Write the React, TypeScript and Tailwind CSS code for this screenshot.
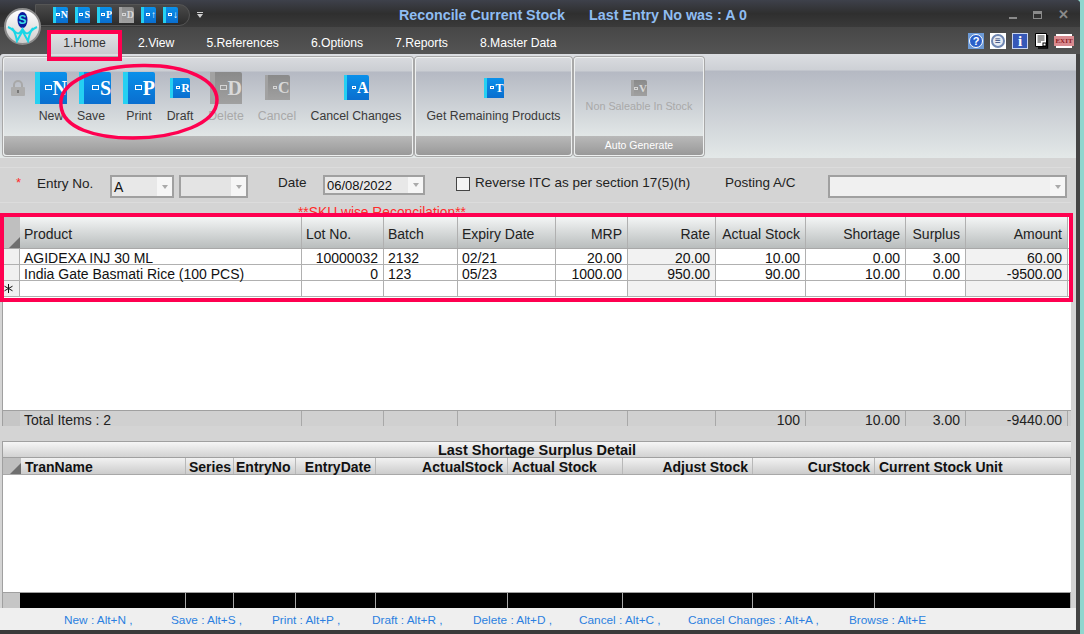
import type { ReactNode } from "react";

const GRID1 = "grid grid-cols-[17px_282px_82px_74px_98px_72px_88px_90px_100px_60px_102px]";
const GRID2 = "grid grid-cols-[18px_165px_48px_62px_80px_132px_115px_130px_122px_196px]";

const stockCols = [
  { name: "Product", right: false },
  { name: "Lot No.", right: false },
  { name: "Batch", right: false },
  { name: "Expiry Date", right: false },
  { name: "MRP", right: true },
  { name: "Rate", right: true },
  { name: "Actual Stock", right: true },
  { name: "Shortage", right: true },
  { name: "Surplus", right: true },
  { name: "Amount", right: true },
];

const rows = [
  ["AGIDEXA INJ 30 ML", "10000032", "2132", "02/21", "20.00", "20.00", "10.00", "0.00", "3.00", "60.00"],
  ["India Gate Basmati Rice (100 PCS)", "0", "123", "05/23", "1000.00", "950.00", "90.00", "10.00", "0.00", "-9500.00"],
  ["", "", "", "", "", "", "", "", "", ""],
];

const totals = ["Total Items : 2", "", "", "", "", "", "100", "10.00", "3.00", "-9440.00"];

const detailCols = [
  { name: "TranName", right: false },
  { name: "Series", right: false },
  { name: "EntryNo", right: false },
  { name: "EntryDate", right: true },
  { name: "ActualStock", right: true },
  { name: "Actual Stock", right: false },
  { name: "Adjust Stock", right: true },
  { name: "CurStock", right: true },
  { name: "Current Stock Unit", right: false },
];

const shortcuts = [
  { label: "New : Alt+N ,", w: "w-[107px]" },
  { label: "Save : Alt+S ,", w: "w-[101px]" },
  { label: "Print : Alt+P ,", w: "w-[100px]" },
  { label: "Draft : Alt+R ,", w: "w-[101px]" },
  { label: "Delete : Alt+D ,", w: "w-[106px]" },
  { label: "Cancel : Alt+C ,", w: "w-[109px]" },
  { label: "Cancel Changes : Alt+A ,", w: "w-[161px]" },
  { label: "Browse : Alt+E", w: "w-[80px]" },
];

function BookIcon({
  letter,
  box,
  text,
  off,
  big,
}: {
  letter: ReactNode;
  box: string;
  text: string;
  off?: boolean;
  big?: boolean;
}) {
  return (
    <div
      className={`${box} flex items-center justify-end overflow-hidden rounded-tr-[2px] ${big ? "border-l-[5px]" : "border-l-[3px]"} ${
        off
          ? "border-[#a2a2a2] bg-gradient-to-b from-[#8a8a8a] to-[#a0a0a0]"
          : "border-[#25d0f2] bg-gradient-to-b from-[#0a90ea] to-[#0a6ecf]"
      }`}
    >
      <span className={`mr-[1px] shrink-0 border border-white ${big ? "h-[5px] w-[7px]" : "h-[3px] w-[4px]"} ${off ? "opacity-60" : ""}`} />
      <span className={`${text} font-['Liberation_Serif',serif] font-bold leading-none ${off ? "text-[#d8d8d8]" : "text-white"}`}>
        {letter}
      </span>
    </div>
  );
}

function RibbonButton({
  w,
  label,
  off,
  children,
}: {
  w: string;
  label: string;
  off?: boolean;
  children: ReactNode;
}) {
  return (
    <div className={`${w} flex h-full shrink-0 flex-col items-center`}>
      <div className="flex h-[50px] items-center justify-center pt-[3px]">{children}</div>
      <span className={`-mt-[3px] whitespace-nowrap text-[12.3px] leading-[16px] ${off ? "text-[#a9a9a9]" : "text-[#3a3a3a]"}`}>
        {label}
      </span>
    </div>
  );
}

function RibbonGroup({ w, caption, children }: { w: string; caption?: string; children: ReactNode }) {
  return (
    <div className={`${w} flex h-[99px] shrink-0 flex-col rounded-[3px] border border-[#eef0f0] bg-[linear-gradient(#d8dade_0,#cbced3_13px,#b5b9c3_14px,#e2e7e7_79px)] shadow-[0_0_0_1px_#a8a8a8]`}>
      <div className="flex h-[79px] items-start pt-[3px]">{children}</div>
      <div className="flex h-[19px] items-center justify-center rounded-b-[3px] bg-gradient-to-b from-[#b9b9b9] to-[#999999] text-[10.5px] text-white">
        {caption}
      </div>
    </div>
  );
}

function Combo({ w, h, bg, children }: { w: string; h: string; bg: string; children?: ReactNode }) {
  return (
    <div className={`${w} ${h} ${bg} flex shrink-0 items-center border-2 border-[#a0a0a0] pl-[2px] text-[14px] leading-none text-[#111]`}>
      <span className="flex-1 whitespace-nowrap">{children}</span>
      <span className="flex h-full w-[15px] items-center justify-center bg-[#f6f6f6]">
        <span className="h-0 w-0 border-x-[3px] border-t-[4px] border-x-transparent border-t-[#aaaaaa]" />
      </span>
    </div>
  );
}

function Corner() {
  return (
    <div className="relative bg-[#bfbfbf]">
      <svg className="absolute bottom-0 right-0" width="11" height="11" viewBox="0 0 11 11">
        <path d="M11 0V11H0Z" fill="#6f6f6f" />
      </svg>
    </div>
  );
}

function Logo() {
  return (
    <div className="absolute left-[4px] top-[8px] flex h-[37px] w-[37px] items-center justify-center rounded-full border-2 border-[#8d8d8d] bg-gradient-to-b from-[#ffffff] to-[#cfcfcf]">
      <svg width="31" height="32" viewBox="0 0 31 32">
        <ellipse cx="15.5" cy="9" rx="5" ry="8" fill="#0a1c9c" />
        <text x="15.5" y="13" textAnchor="middle" fontSize="12" fontWeight="700" fill="#3fe0ea" fontFamily="Liberation Sans">
          S
        </text>
        <path
          d="M1 16C6 18 8 20 10 30L15.5 20L21 30C23 20 25 18 30 16M5 17C10 24 12 24 15.5 18C19 24 21 24 26 17"
          fill="none"
          stroke="#19d6e6"
          strokeWidth="2"
        />
      </svg>
    </div>
  );
}

function TopIcons() {
  return (
    <div className="flex items-center gap-[6px] pr-[4px]">
      <div className="flex h-[16px] w-[16px] items-center justify-center bg-[#6d9ad6]">
        <div className="flex h-[14px] w-[14px] items-center justify-center rounded-full border border-white bg-[#2a5fc8] text-[11px] font-bold leading-none text-white">
          ?
        </div>
      </div>
      <div className="flex h-[16px] w-[16px] items-center justify-center bg-white">
        <div className="flex h-[14px] w-[14px] items-center justify-center rounded-full border-2 border-[#6f86b2] bg-[#e6ebf4] text-[10px] font-bold leading-none text-[#2b3f73]">
          ≡
        </div>
      </div>
      <div className="flex h-[16px] w-[16px] items-center justify-center border border-[#c8d4f0] bg-[#3658b8] font-['Liberation_Serif',serif] text-[15px] font-bold leading-none text-white">
        i
      </div>
      <svg width="14" height="16" viewBox="0 0 14 16" className="mx-[1px]">
        <path d="M.5.5H11.5V13.5H.5Z" fill="#fff" stroke="#000" />
        <path d="M2.5 3H9.5M2.5 5H9.5M2.5 7H9.5M2.5 9H6" stroke="#333" />
        <path d="M12.5 2V15H3" fill="none" stroke="#000" strokeWidth="1.4" />
        <rect x="8" y="10" width="3" height="3" fill="none" stroke="#000" />
      </svg>
      <div className="flex h-[14px] w-[16px] items-center justify-center bg-white">
        <span className="bg-[#d98b90] px-[1px] font-['Liberation_Serif',serif] text-[7px] font-bold leading-[10px] text-[#8f1c24]">EXIT</span>
      </div>
    </div>
  );
}

export default function App() {
  return (
    <div className="relative flex h-[634px] w-[1084px] overflow-hidden bg-[#8fd6ce] font-['Liberation_Sans',Arial,sans-serif]">
      <div className="flex h-full w-[1080px] flex-col overflow-hidden rounded-tr-[4px] bg-[#3a3a3a]">
        {/* title bar */}
        <div className="relative flex h-[27px] shrink-0 items-center bg-gradient-to-b from-[#3e414b] via-[#2f2f2f] to-[#3a3a3a]">
          <div className="ml-[35px] mt-[2px] flex h-[22px] w-[155px] shrink-0 items-center gap-[7px] rounded-r-[11px] border border-[#555] bg-gradient-to-b from-[#4a4a4a] to-[#2c2c2c] pl-[17px]">
            <BookIcon letter="N" box="h-[16px] w-[15px]" text="text-[10px]" />
            <BookIcon letter="S" box="h-[16px] w-[15px]" text="text-[10px]" />
            <BookIcon letter="P" box="h-[16px] w-[15px]" text="text-[10px]" />
            <BookIcon letter="D" box="h-[16px] w-[15px]" text="text-[10px]" off />
            <BookIcon letter="↑" box="h-[16px] w-[15px]" text="text-[10px]" />
            <BookIcon letter="↓" box="h-[16px] w-[15px]" text="text-[10px]" />
          </div>
          <span className="ml-[6px] mt-[3px] flex w-[8px] flex-col items-center gap-[1px]">
            <span className="h-[1px] w-[6px] bg-[#cfcfcf]" />
            <span className="h-0 w-0 border-x-[3px] border-t-[4px] border-x-transparent border-t-[#cfcfcf]" />
          </span>
          <span className="ml-[195px] mt-[5px] whitespace-nowrap text-[14.3px] font-bold text-[#8fbdf2]">Reconcile Current Stock</span>
          <span className="ml-[24px] mt-[5px] whitespace-nowrap text-[14.3px] font-bold text-[#8fbdf2]">Last Entry No was : A 0</span>
          <div className="ml-auto mt-[2px] flex items-center gap-[16px] pr-[11px]">
            <span className="mt-[7px] h-[2px] w-[8px] bg-[#8a8a8a]" />
            <span className="h-[8px] w-[9px] border border-t-[3px] border-[#8a8a8a]" />
            <span className="text-[13px] font-bold leading-none text-[#8a8a8a]">✕</span>
          </div>
          <Logo />
        </div>

        {/* menu */}
        <div className="flex h-[27px] shrink-0 items-end justify-between bg-gradient-to-b from-[#474747] to-[#545454] pl-[51px] pr-[4px]">
          <div className="flex h-full items-end text-[12.2px] text-white">
            <div className="flex h-[24px] w-[67px] items-center justify-center rounded-t-[2px] bg-gradient-to-b from-[#e4e5e8] to-[#c9cbd0] pt-[3px] text-[#333]">
              1.Home
            </div>
            <span className="mb-[2px] ml-[20px]">2.View</span>
            <span className="mb-[2px] ml-[32px]">5.References</span>
            <span className="mb-[2px] ml-[32px]">6.Options</span>
            <span className="mb-[2px] ml-[32px]">7.Reports</span>
            <span className="mb-[2px] ml-[32px]">8.Master Data</span>
          </div>
          <div className="mb-[5px]">
            <TopIcons />
          </div>
        </div>

        {/* ribbon */}
        <div className="flex h-[104px] shrink-0 gap-[2px] rounded-tl-[3px] border-r-4 border-[#444] bg-[linear-gradient(#dcdee2_0,#cdd0d5_16px,#b5b9c3_17px,#e3e8e8_100%)] pl-[3px] pt-[3px]">
          <RibbonGroup w="w-[410px]">
            <div className="flex h-[64px] w-[27px] shrink-0 items-start justify-center pt-[19px]">
              <svg width="16" height="17" viewBox="0 0 16 17">
                <path d="M4 8V5a4 4 0 0 1 8 0v3" fill="none" stroke="#a8a8a8" strokeWidth="2" />
                <rect x="1" y="7" width="14" height="9" rx="1" fill="#adadad" />
                <rect x="7" y="10" width="2" height="3" fill="#777" />
              </svg>
            </div>
            <RibbonButton w="w-[40px]" label="New">
              <BookIcon letter="N" box="h-[32px] w-[32px]" text="text-[20px]" big />
            </RibbonButton>
            <RibbonButton w="w-[40px]" label="Save">
              <BookIcon letter="S" box="ml-[8px] h-[32px] w-[32px]" text="text-[20px]" big />
            </RibbonButton>
            <RibbonButton w="w-[56px]" label="Print">
              <BookIcon letter="P" box="h-[32px] w-[32px]" text="text-[20px]" big />
            </RibbonButton>
            <RibbonButton w="w-[26px]" label="Draft">
              <BookIcon letter="R" box="h-[20px] w-[20px]" text="text-[12px]" />
            </RibbonButton>
            <RibbonButton w="w-[66px]" label="Delete" off>
              <BookIcon letter="D" box="h-[32px] w-[32px]" text="text-[20px]" off big />
            </RibbonButton>
            <RibbonButton w="w-[36px]" label="Cancel" off>
              <BookIcon letter="C" box="h-[25px] w-[25px]" text="text-[16px]" off />
            </RibbonButton>
            <RibbonButton w="w-[122px]" label="Cancel Changes">
              <BookIcon letter="A" box="h-[25px] w-[25px]" text="text-[16px]" />
            </RibbonButton>
          </RibbonGroup>
          <RibbonGroup w="w-[157px]">
            <RibbonButton w="w-full" label="Get Remaining Products">
              <BookIcon letter="T" box="h-[20px] w-[20px]" text="text-[12px]" />
            </RibbonButton>
          </RibbonGroup>
          <RibbonGroup w="w-[130px]" caption="Auto Generate">
            <div className="flex w-full flex-col items-center pt-[19px]">
              <BookIcon letter="V" box="h-[16px] w-[16px]" text="text-[11px]" off />
              <span className="mt-[2px] whitespace-nowrap text-[10.8px] leading-[16px] text-[#a9a9a9]">Non Saleable In Stock</span>
            </div>
          </RibbonGroup>
        </div>

        {/* main */}
        <div className="flex min-h-0 flex-1 flex-col border-r-4 border-[#444] bg-[#d4d4d4] pr-[5px]">
          <div className="flex h-[58px] shrink-0 flex-col pt-[9px]">
            <div className="flex h-[36px] shrink-0 items-start border-y border-[#dcdcdc] pt-[7px] text-[13.5px] leading-[16px] text-[#222]">
              <span className="ml-[16px] w-[21px] text-[13px] text-[#ff2a2a]">*</span>
              <span className="w-[73px] pt-[1px]">Entry No.</span>
              <Combo w="w-[64px]" h="h-[23px]" bg="bg-[#e8e8e8]">
                A
              </Combo>
              <div className="ml-[5px]">
                <Combo w="w-[69px]" h="h-[23px]" bg="bg-[#e4e4e4]" />
              </div>
              <span className="ml-[30px] w-[45px]">Date</span>
              <Combo w="w-[102px]" h="h-[20px]" bg="bg-[#e8e8e8]">
                <span className="text-[13px]">06/08/2022</span>
              </Combo>
              <span className="ml-[31px] mt-[2px] h-[14px] w-[14px] border border-[#444] bg-[#f4f4f4]" />
              <span className="ml-[5px] w-[250px]">Reverse ITC as per section 17(5)(h)</span>
              <span className="w-[103px]">Posting A/C</span>
              <Combo w="w-[239px]" h="h-[23px]" bg="bg-[#f0f0f0]" />
            </div>
            <div className="h-[13px] pl-[298px] pt-[2px] text-[13.8px] leading-[16px] text-[#ff2a2a]">**SKU wise Reconcilation**</div>
          </div>

          {/* stock grid */}
          <div className="relative ml-[2px] flex h-[210px] shrink-0 flex-col border-l border-[#a0a0a0] bg-white">
            <div className={`${GRID1} h-[33px] shrink-0 border-y border-[#a8a8a8] text-[14px] text-[#222]`}>
              <Corner />
              {stockCols.map((c) => (
                <div
                  key={c.name}
                  className={`flex items-center border-r border-[#b0b0b0] bg-gradient-to-b from-[#f4f6f6] to-[#b9bdbd] pl-[4px] pr-[5px] pt-[3px] ${c.right ? "justify-end" : ""}`}
                >
                  {c.name}
                </div>
              ))}
            </div>
            {rows.map((row, i) => (
              <div key={i} className={`${GRID1} h-[16px] shrink-0 grid-rows-[15px] border-b border-[#b0b0b0] text-[14px] leading-[15px] text-[#111]`}>
                <div className="flex items-center border-r border-[#b0b0b0] bg-[#f0f0f0]">
                  {i === 2 && (
                    <svg width="9" height="9" viewBox="0 0 9 9" className="ml-[1px]">
                      <path d="M4.5 0V9M.5 2.2L8.500 6.800M8.500 2.200L.5 6.800" stroke="#111" strokeWidth="1" />
                    </svg>
                  )}
                </div>
                {row.map((val, j) => (
                  <div
                    key={j}
                    className={`whitespace-nowrap border-r border-[#b0b0b0] pl-[4px] pr-[5px] pt-[2px] ${stockCols[j].right || j === 1 ? "text-right" : ""} ${j === 5 || j === 9 ? "bg-[#f2f2f2]" : ""}`}
                  >
                    {val}
                  </div>
                ))}
              </div>
            ))}
            <div className="flex-1" />
            <div className={`${GRID1} h-[16px] shrink-0 grid-rows-[15px] border-t border-[#a0a0a0] bg-[#d0d0d0] text-[14px] leading-[15px] text-[#222]`}>
              <div className="bg-[#c6c6c6]" />
              {totals.map((val, j) => (
                <div key={j} className={`whitespace-nowrap border-r border-[#a8a8a8] pl-[4px] pr-[5px] pt-[2px] ${j > 0 ? "text-right" : ""}`}>
                  {val}
                </div>
              ))}
            </div>
          </div>

          <div className="h-[15px] shrink-0 bg-[#d4d4d4]" />

          {/* detail grid */}
          <div className="ml-[2px] flex h-[167px] shrink-0 flex-col border-l border-[#a0a0a0] bg-white">
            <div className="flex h-[17px] shrink-0 items-center justify-center border-y border-[#a0a0a0] bg-gradient-to-b from-[#f6f6f6] to-[#d2d2d2] pt-[1px] text-[14.5px] font-bold leading-[15px] text-[#111]">
              Last Shortage Surplus Detail
            </div>
            <div className={`${GRID2} h-[17px] shrink-0 grid-rows-[16px] border-b border-[#a8a8a8] text-[14px] font-bold leading-[15px] text-[#111]`}>
              <Corner />
              {detailCols.map((c) => (
                <div
                  key={c.name}
                  className={`whitespace-nowrap border-r border-[#b8b8b8] bg-gradient-to-b from-[#f2f2f2] to-[#cccccc] pt-[2px] ${c.right ? "pr-[4px] text-right" : c.name === "EntryNo" ? "pl-[2px]" : c.name === "Series" ? "pl-[3px]" : "pl-[4px]"}`}
                >
                  {c.name}
                </div>
              ))}
            </div>
            <div className="flex-1" />
            <div className={`${GRID2} h-[16px] shrink-0 border-t border-[#a0a0a0] bg-black`}>
              <div className="w-[17px] bg-[#c6c6c6]" />
              {detailCols.map((c) => (
                <div key={c.name} className="border-r border-[#a8a8a8]" />
              ))}
            </div>
          </div>

          {/* shortcuts */}
          <div className="-mr-[5px] flex h-[22px] shrink-0 items-center bg-[#efefef] pl-[64px] pt-[3px] text-[11.8px] text-[#2b7fe0]">
            {shortcuts.map((s) => (
              <span key={s.label} className={`${s.w} whitespace-nowrap`}>
                {s.label}
              </span>
            ))}
          </div>
        </div>
        <div className="h-[4px] shrink-0 bg-[#3a3a3a]" />
      </div>

      {/* annotation marks drawn over the screen */}
      <div className="absolute left-[47px] top-[30px] h-[31px] w-[75px] border-4 border-[#ff0050]" />
      <div className="absolute left-0 top-[213px] h-[89px] w-[1073px] border-4 border-[#ff0050]" />
      <svg className="absolute left-[55px] top-[60px]" width="170" height="84" viewBox="0 0 170 84">
        <path
          d="M6 46C3 22 40 6 88 5.500C132 5 162 20 162 40C162 64 120 78 78 78C40 78 8 68 6 46Z"
          fill="none"
          stroke="#ff0050"
          strokeWidth="3.5"
        />
      </svg>
    </div>
  );
}
